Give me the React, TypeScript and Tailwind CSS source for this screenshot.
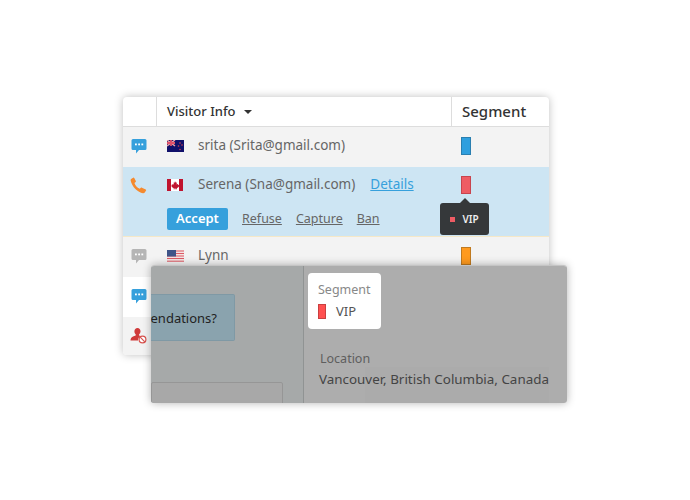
const font = { fontFamily: '"Noto Sans", sans-serif' };

function Bubble({ className }: { className: string }) {
  return (
    <svg viewBox="0 0 16 16" className={className} fill="currentColor">
      <path d="M2 1h12a1.500 1.500 0 0 1 1.500 1.500v8A1.500 1.500 0 0 1 14 12H8l-3 3.400V12H2A1.500 1.500 0 0 1 .5 10.500v-8A1.500 1.500 0 0 1 2 1z" />
      <rect x="4" y="5.500" width="1.800" height="1.800" fill="#fff" />
      <rect x="7.200" y="5.500" width="1.800" height="1.800" fill="#fff" />
      <rect x="10.400" y="5.500" width="1.800" height="1.800" fill="#fff" />
    </svg>
  );
}

function Phone() {
  return (
    <svg viewBox="0 0 16 16" className="w-[17px] h-[17px] text-[#f58a2e]" fill="currentColor">
      <path d="M1 1.800 3 .6c.5-.2.8 0 1 .4l1.500 2.800c.2.400.1.700-.2 1L4.200 5.600c.4 1.800 2.400 4.400 5 5.400l1-.9c.3-.3.700-.3 1 0l3.600 1.700c.5.200.6.600.3 1l-1.200 1.800c-.4.500-1 .8-1.700.7C7.500 14.800 1.800 9.400.6 3.400.5 2.800.6 2.200 1 1.800z" />
    </svg>
  );
}

function Blocked() {
  return (
    <svg viewBox="0 0 17 17" className="w-[17px] h-[17px]">
      <path fill="#cf3a3a" d="M7.500 1c1.800 0 3 1.400 3 3.200 0 1.300-.6 2.500-1.400 3.100v1.200l1.500.7A4.500 4.500 0 0 0 8 13.500H.5c0-2.200.8-3.400 2.500-4.100l2.700-1V7.300C4.900 6.700 4.400 5.500 4.400 4.200 4.400 2.400 5.700 1 7.500 1z" />
      <circle cx="12.500" cy="12.500" r="3.400" fill="#fff" stroke="#d9534f" strokeWidth="1.200" />
      <path d="M10.200 10.200l4.600 4.600" stroke="#d9534f" strokeWidth="1.200" />
    </svg>
  );
}

function NzFlag() {
  return (
    <svg viewBox="0 0 17 12" className="w-[17px] h-[12px]">
      <rect width="17" height="12" fill="#10106a" />
      <path d="M0 0l8 6M8 0 0 6" stroke="#e8a0a8" strokeWidth="1.500" />
      <path d="M4 0v6M0 3h8" stroke="#e0516a" strokeWidth="1.800" />
      <circle cx="13" cy="3" r=".8" fill="#d84050" />
      <circle cx="15" cy="5" r=".8" fill="#d84050" />
      <circle cx="11.500" cy="6" r=".8" fill="#d84050" />
      <circle cx="13" cy="9.500" r=".8" fill="#d84050" />
    </svg>
  );
}

function CaFlag() {
  return (
    <svg viewBox="0 0 16 12" className="w-[16px] h-[12px]">
      <rect width="16" height="12" fill="#fff" />
      <rect width="4" height="12" fill="#c0142f" />
      <rect x="12" width="4" height="12" fill="#c0142f" />
      <path d="M8 2.200l1 1.600.9-.4-.3 2.200 1.300-.6.300.9 1-.1-.5 1.500.4.400-2.400 1.500.2 1H8.300V8.900L8 8.900l-.3 0v1.300H6.600l.2-1-2.400-1.500.4-.4-.5-1.500 1 .1.300-.9 1.300.6-.3-2.200.9.400z" fill="#c0142f" />
    </svg>
  );
}

function UsFlag() {
  return (
    <svg viewBox="0 0 17 12" className="w-[17px] h-[12px]">
      <rect width="17" height="12" fill="#f4e4e4" />
      <path d="M0 1h17M0 3.500h17M0 6h17M0 8.500h17M0 11.200h17" stroke="#dc5a64" strokeWidth="1" />
      <rect width="9" height="6.500" fill="#3f5488" />
    </svg>
  );
}

function Seg({ color, border }: { color: string; border: string }) {
  return <div className={`w-[10px] h-[18px] border ${color} ${border}`} />;
}

function Row({
  bg,
  icon,
  flag,
  name,
  seg,
  h = "h-10",
}: {
  bg: string;
  icon: React.ReactNode;
  flag?: React.ReactNode;
  name?: string;
  seg?: React.ReactNode;
  h?: string;
}) {
  return (
    <div className={`flex items-center pb-[2px] ${h} ${bg}`}>
      <div className="w-[31px] flex justify-center">{icon}</div>
      <div className="w-[44px] pl-[13px] flex">{flag}</div>
      <div className="w-[253px] text-[13.5px] leading-[18px] -mt-[2px] text-[#666]">{name}</div>
      <div className="pl-[10px]">{seg}</div>
    </div>
  );
}

export default function App() {
  return (
    <div className="w-[690px] h-[500px] bg-white overflow-hidden pt-[97px] pl-[123px]" style={font}>
      <div className="relative w-[426px]">
        <div className="rounded-[4px] bg-white shadow-[0_0_8px_rgba(0,0,0,0.25)] overflow-hidden">
          {/* header */}
          <div className="flex h-[30px] border-b border-[#ddd] text-[13px] font-medium text-[#333]">
            <div className="w-[34px] border-r border-[#ddd]" />
            <div className="w-[295px] border-r border-[#ddd] pl-[10px] flex items-center gap-[9px]">
              Visitor Info
              <span className="w-0 h-0 border-x-[4px] border-x-transparent border-t-[4px] border-t-[#333]" />
            </div>
            <div className="pl-[10px] flex items-center text-[15px] text-[#333]">Segment</div>
          </div>

          <Row
            bg="bg-[#f3f3f3]"
            icon={<Bubble className="w-4 h-4 text-[#36a0dc]" />}
            flag={<NzFlag />}
            name="srita (Srita@gmail.com)"
            seg={<Seg color="bg-[#2f9fde]" border="border-[#2a7fb0]" />}
          />

          {/* ringing visitor */}
          <div className="h-[70px] bg-[#cde5f3] border-b border-[#f5e8c8] pt-[8px]">
            <div className="flex items-center h-[20px]">
              <div className="w-[31px] flex justify-center">
                <Phone />
              </div>
              <div className="w-[44px] pl-[13px] flex">
                <CaFlag />
              </div>
              <div className="w-[253px] text-[13.5px] leading-[18px] -mt-[2px] text-[#666] flex gap-[15px]">
                <span>Serena (Sna@gmail.com)</span>
                <span className="text-[#36a0dc] underline">Details</span>
              </div>
              <div className="pl-[10px]">
                <Seg color="bg-[#ee5c64]" border="border-[#c8444e]" />
              </div>
            </div>
            <div className="flex items-center mt-[13px] pl-[44px] text-[12.5px] text-[#666] gap-[14px]">
              <span className="w-[61px] h-[22px] rounded-[2px] bg-[#36a0dc] text-[13px] text-white font-semibold flex items-center justify-center">
                Accept
              </span>
              <span className="underline">Refuse</span>
              <span className="underline">Capture</span>
              <span className="underline">Ban</span>
            </div>
          </div>

          <Row
            bg="bg-[#f3f3f3]"
            icon={<Bubble className="w-4 h-4 text-[#b5b5b5]" />}
            flag={<UsFlag />}
            name="Lynn"
            seg={<Seg color="bg-[#ff9a1e]" border="border-[#c07a20]" />}
          />
          <Row bg="bg-white" icon={<Bubble className="w-4 h-4 text-[#36a0dc]" />} />
          <Row bg="bg-[#f3f3f3]" h="h-[38px]" icon={<Blocked />} />
        </div>

        {/* segment tooltip */}
        <div className="absolute left-[317px] top-[106px] w-[49px] h-[32px] rounded-[3px] bg-[#35383a] flex items-center justify-center gap-[7px] text-[10px] font-semibold text-[#eee]">
          <span className="absolute -top-[5px] left-[20px] w-0 h-0 border-x-[5px] border-x-transparent border-b-[5px] border-b-[#35383a]" />
          <span className="w-[5px] h-[5px] bg-[#ee5c64]" />
          VIP
        </div>

        {/* dimmed chat window */}
        <div className="absolute left-[28px] top-[168px] w-[416px] h-[138px] rounded-[3px] overflow-hidden flex shadow-[0_0_8px_rgba(0,0,0,0.3)] border-t border-[#c4c4c4]">
          <div className="w-[153px] bg-[#a6a9a9] border-r border-[#909393] relative">
            <div className="absolute left-0 top-[28px] w-[84px] h-[47px] overflow-hidden bg-[#8aa3ae] border border-[#7f99a5] border-l-0 rounded-r-[2px] flex items-center justify-end pr-[17px] pt-[2px] text-[13px] text-[#222] whitespace-nowrap">
              endations?
            </div>
            <div className="absolute left-0 top-[116px] w-[132px] h-[30px] bg-[#a8a8a8] border border-[#969696] rounded-[2px]" />
          </div>
          <div className="flex-1 bg-[#adadad] relative">
            <div className="absolute left-[61px] top-[101px] w-[184px] h-[36px] bg-[#ababab]" />
            <div className="absolute left-[4px] top-[7px] w-[73px] h-[56px] bg-white rounded-[4px] pl-[10px] pt-[8px] text-[12.5px]">
              <div className="text-[#888]">Segment</div>
              <div className="flex items-center gap-[10px] text-[13px] text-[#555] mt-[2px]">
                <span className="w-[8px] h-[15px] bg-[#ff5050] border border-[#c94040]" />
                VIP
              </div>
            </div>
            <div className="absolute left-[16px] top-[84px] text-[12.5px] text-[#5e5e5e]">Location</div>
            <div className="absolute left-[15px] top-[103px] text-[13.4px] text-[#444] whitespace-nowrap">
              Vancouver, British Columbia, Canada
            </div>
          </div>
        </div>
      </div>
    </div>
  );
}
